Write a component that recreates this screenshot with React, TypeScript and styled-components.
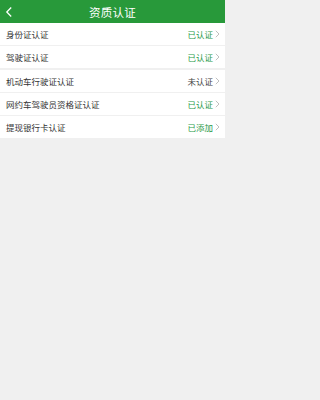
import React from 'react';
import styled, { createGlobalStyle } from 'styled-components';

const GlobalStyle = createGlobalStyle`
  html, body {
    margin: 0;
    padding: 0;
    background: #f0f0f0;
  }
  body {
    font-family: "Noto Sans CJK SC", "Noto Sans", sans-serif;
  }
`;

interface Item {
  label: string;
  status: string;
  done: boolean;
}

const items: Item[] = [
  { label: '身份证认证', status: '已认证', done: true },
  { label: '驾驶证认证', status: '已认证', done: true },
  { label: '机动车行驶证认证', status: '未认证', done: false },
  { label: '网约车驾驶员资格证认证', status: '已认证', done: true },
  { label: '提现银行卡认证', status: '已添加', done: true },
];

const App: React.FC = () => (
  <Page>
    <GlobalStyle />
    <TopBar>
      <BackButton>
        <svg width="8" height="12" viewBox="0 0 8 12">
          <path d="M6.2 1.5 L1.8 6 L6.2 10.5" fill="none" stroke="#fff" strokeWidth="1.3" />
        </svg>
      </BackButton>
      <Title>资质认证</Title>
    </TopBar>
    <List>
      {items.map(item => (
        <Row key={item.label}>
          <Label>{item.label}</Label>
          <Status done={item.done}>{item.status}</Status>
          <svg width="5" height="8" viewBox="0 0 5 8">
            <path d="M0.8 0.8 L4 4 L0.8 7.2" fill="none" stroke="#b8b8b8" strokeWidth="0.9" />
          </svg>
        </Row>
      ))}
    </List>
  </Page>
);

export default App;

const Page = styled.div`
  width: 225px;
  min-height: 400px;
  background: #f0f0f0;
`;

const TopBar = styled.header`
  position: relative;
  height: 23px;
  background: #28993a;
  display: flex;
  align-items: center;
  justify-content: center;
`;

const BackButton = styled.div`
  position: absolute;
  left: 5px;
  top: 0;
  height: 23px;
  display: flex;
  align-items: center;
`;

const Title = styled.h1`
  margin: 0;
  color: #fff;
  font-size: 11.5px;
  font-weight: 400;
  letter-spacing: 0.3px;
`;

const List = styled.ul`
  list-style: none;
  margin: 0;
  padding: 0;
  display: flex;
  flex-direction: column;
  gap: 1.3px;
`;

const Row = styled.li`
  height: 22px;
  background: #fff;
  display: flex;
  align-items: center;
  padding: 0 5px 0 6px;
  gap: 2px;
`;

const Label = styled.span`
  flex: 1;
  font-size: 8.5px;
  color: #333;
`;

const Status = styled.span<{ done: boolean }>`
  font-size: 8.5px;
  color: ${({ done }) => (done ? '#2a9a48' : '#444')};
`;
